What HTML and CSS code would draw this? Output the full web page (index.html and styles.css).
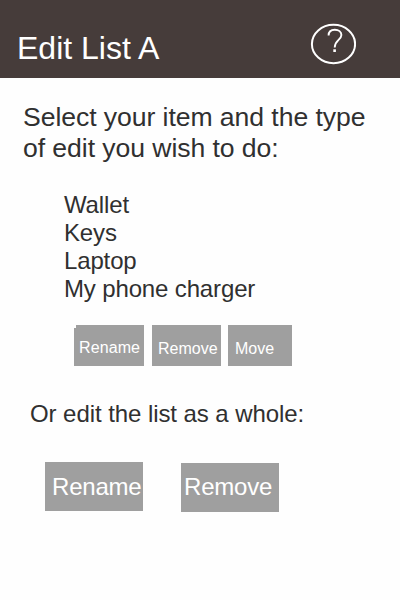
FILE: index.html
```html
<!DOCTYPE html>
<html lang="en">
<head>
<meta charset="utf-8">
<title>Edit List A</title>
<link rel="stylesheet" href="styles.css">
</head>
<body>
<header class="header">
  <h1 class="title">Edit List A</h1>
  <svg class="help" width="46" height="42" viewBox="0 0 46 42" fill="none" stroke="#fff" role="img" aria-label="Help">
    <ellipse cx="23.5" cy="21" rx="21.6" ry="19.2" stroke-width="2"/>
    <path d="M18.6 12.6C18.6 9 21 6.8 24.8 6.8C28.6 6.8 31.4 9 31.4 12C31.4 16.8 24.7 17.2 24.7 24.4" stroke-width="1.9"/>
    <path d="M24.6 26.3V29" stroke-width="2.6"/>
  </svg>
</header>
<main class="content">
  <p class="intro">Select your item and the type<br>of edit you wish to do:</p>
  <ul class="items">
    <li>Wallet</li>
    <li>Keys</li>
    <li>Laptop</li>
    <li>My phone charger</li>
  </ul>
  <div class="item-actions">
    <button class="button rename">Rename</button>
    <button class="button remove">Remove</button>
    <button class="button move">Move</button>
  </div>
  <p class="whole">Or edit the list as a whole:</p>
  <div class="list-actions">
    <button class="button large-rename">Rename</button>
    <button class="button large-remove">Remove</button>
  </div>
</main>
</body>
</html>
```
FILE: styles.css
```css
* {
  box-sizing: border-box;
  margin: 0;
  padding: 0;
}

body {
  height: 600px;
  overflow: hidden;
  background: #fefefe;
  color: #303030;
  font-family: "Liberation Sans", Arial, sans-serif;
}

.header {
  display: flex;
  justify-content: space-between;
  align-items: flex-start;
  height: 78px;
  padding: 23px 44px 0 17px;
  background: #463c3a;
}

.title {
  padding-top: 7px;
  color: #fff;
  font-size: 32px;
  font-weight: 400;
  line-height: 36px;
}

.help {
  width: 46px;
  height: 42px;
}

.content {
  padding-top: 24px;
}

.intro {
  padding-left: 23px;
  font-size: 26.6px;
  line-height: 31px;
  letter-spacing: -0.07px;
  white-space: nowrap;
}

.items {
  padding: 27px 0 0 64px;
  font-size: 24px;
  line-height: 28px;
  letter-spacing: -0.14px;
  list-style: none;
}

.item-actions {
  display: flex;
  padding: 22px 0 0 74px;
}

.button {
  height: 41px;
  border: 0;
  background: #9f9f9f;
  color: #fff;
  font: 16px/18px "Liberation Sans", Arial, sans-serif;
  text-align: left;
  white-space: nowrap;
}

.rename {
  width: 70px;
  margin-right: 8px;
  padding: 4px 0 0 5px;
  letter-spacing: 0.1px;
  clip-path: polygon(2px 0, 100% 0, 100% 100%, 0 100%, 0 3px, 2px 3px);
}

.remove {
  width: 69px;
  margin-right: 7px;
  padding: 6px 0 0 6px;
}

.move {
  width: 64px;
  padding: 6px 0 0 7px;
}

.whole {
  padding: 34px 0 0 30px;
  font-size: 24px;
  line-height: 28px;
  letter-spacing: -0.07px;
}

.list-actions {
  display: flex;
  gap: 38px;
  padding: 34px 0 0 45px;
}

.large-rename,
.large-remove {
  width: 98px;
  height: 49px;
  font-size: 24px;
  line-height: 28px;
  letter-spacing: -0.2px;
}

.large-rename {
  padding: 1px 0 0 7px;
}

.large-remove {
  margin-top: 1px;
  padding: 0 0 1px 3px;
}
```
